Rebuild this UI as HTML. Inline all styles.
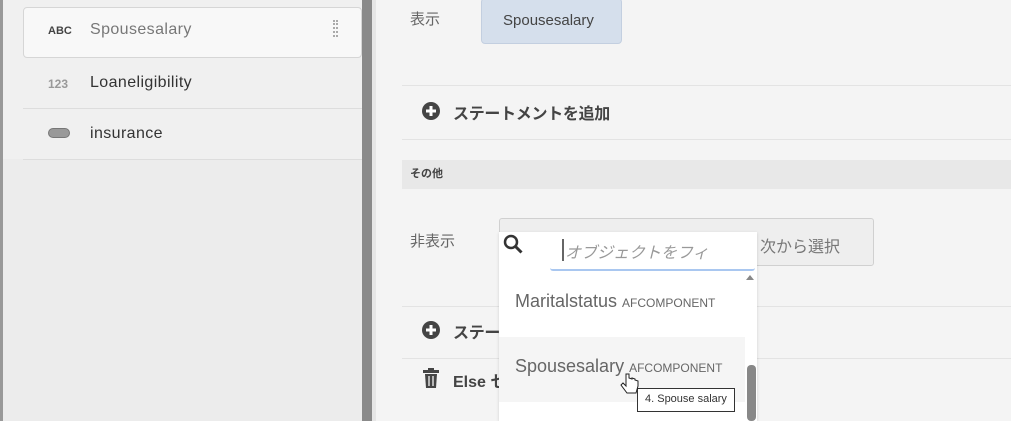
<!DOCTYPE html><html><head><meta charset="utf-8"><style>
*{margin:0;padding:0;box-sizing:border-box}
body{width:1011px;height:421px;overflow:hidden;background:#f4f4f4;font-family:"Liberation Sans","Noto Sans CJK JP",sans-serif;position:relative}
.a{position:absolute}
</style></head><body>
<div class="a" style="left:0;top:0;width:362px;height:421px;background:#ececec"></div>
<div class="a" style="left:0;top:0;width:3px;height:421px;background:#999"></div>
<div class="a" style="left:3px;top:0;width:359px;height:159px;background:#f0f0f0"></div>
<div class="a" style="left:23px;top:7px;width:339px;height:51px;background:#f8f8f8;border:1px solid #d6d6d6;border-radius:4px"></div>
<div class="a" style="left:48px;top:25px;font-size:11px;font-weight:bold;color:#444">ABC</div>
<div class="a" style="left:90px;top:21px;font-size:16px;color:#777;letter-spacing:.4px">Spousesalary</div>
<div class="a" style="left:333px;top:20px;width:5px;height:17px;border-left:2px dotted #aaa;border-right:2px dotted #aaa"></div>
<div class="a" style="left:48px;top:77px;font-size:12px;font-weight:bold;color:#999">123</div>
<div class="a" style="left:90px;top:74px;font-size:16px;color:#333;letter-spacing:.4px">Loaneligibility</div>
<div class="a" style="left:23px;top:108px;width:339px;height:1px;background:#ddd"></div>
<div class="a" style="left:48px;top:128px;width:22px;height:10px;border-radius:5px;background:#999;border:1px solid #777"></div>
<div class="a" style="left:90px;top:125px;font-size:16px;color:#333;letter-spacing:.4px">insurance</div>
<div class="a" style="left:23px;top:159px;width:339px;height:1px;background:#ddd"></div>
<div class="a" style="left:362px;top:0;width:10px;height:421px;background:#8a8a8a"></div>
<div class="a" style="left:372px;top:0;width:4px;height:421px;background:#e6e6e6"></div>

<div class="a" style="left:410px;top:8px;font-size:15px;color:#666">表示</div>
<div class="a" style="left:481px;top:-2px;width:141px;height:46px;background:#d5dfec;border:1px solid #c3cfe0;border-radius:4px"></div>
<div class="a" style="left:503px;top:12px;font-size:15px;color:#444">Spousesalary</div>
<div class="a" style="left:402px;top:85px;width:609px;height:1px;background:#e3e3e3"></div>
<svg class="a" style="left:421px;top:101px" width="20" height="20"><circle cx="10" cy="10" r="9" fill="#444"/><path d="M10 5v10M5 10h10" stroke="#fff" stroke-width="3"/></svg>
<div class="a" style="left:453px;top:100px;font-size:16px;font-weight:bold;color:#444;letter-spacing:-.3px">ステートメントを追加</div>
<div class="a" style="left:402px;top:139px;width:609px;height:1px;background:#e3e3e3"></div>
<div class="a" style="left:402px;top:160px;width:609px;height:29px;background:#e8e8e8"></div>
<div class="a" style="left:410px;top:165px;font-size:11px;font-weight:bold;color:#444">その他</div>
<div class="a" style="left:410px;top:230px;font-size:15px;color:#666">非表示</div>
<div class="a" style="left:499px;top:218px;width:375px;height:48px;background:#eee;border:1px solid #d0d0d0;border-radius:3px"></div>
<div class="a" style="left:760px;top:233px;font-size:16px;color:#777">次から選択</div>
<div class="a" style="left:402px;top:306px;width:609px;height:1px;background:#e3e3e3"></div>
<svg class="a" style="left:421px;top:320px" width="20" height="20"><circle cx="10" cy="10" r="9" fill="#444"/><path d="M10 5v10M5 10h10" stroke="#fff" stroke-width="3"/></svg>
<div class="a" style="left:453px;top:319px;font-size:16px;font-weight:bold;color:#444;letter-spacing:-.3px">ステー</div>
<div class="a" style="left:402px;top:358px;width:609px;height:1px;background:#e3e3e3"></div>
<svg class="a" style="left:422px;top:368px" width="18" height="21"><rect x="1" y="2" width="16" height="3" fill="#444"/><rect x="6" y="0" width="6" height="3" fill="#444"/><path d="M3 6h12l-1 14H4z" fill="#444"/><path d="M7 8v10M11 8v10" stroke="#f4f4f4" stroke-width="1.3"/></svg>
<div class="a" style="left:453px;top:368px;font-size:16px;font-weight:bold;color:#444">Else セ</div>

<div class="a" style="left:499px;top:232px;width:258px;height:189px;background:#fff;box-shadow:0 1px 3px rgba(0,0,0,.15)"></div>
<svg class="a" style="left:502px;top:233px" width="24" height="24"><circle cx="9" cy="9" r="6" fill="none" stroke="#333" stroke-width="2.5"/><path d="M13.5 13.5l6 6" stroke="#333" stroke-width="3"/></svg>
<div class="a" style="left:550px;top:232px;width:205px;height:39px;border-bottom:2px solid #a9c7f0;border-radius:0 0 3px 3px"></div>
<div class="a" style="left:562px;top:239px;width:2px;height:22px;background:#666"></div>
<div class="a" style="left:565px;top:239px;font-size:16px;font-style:italic;color:#999">オブジェクトをフィ</div>
<div class="a" style="left:499px;top:337px;width:246px;height:65px;background:#f5f5f5"></div>
<div class="a" style="left:515px;top:291px;font-size:18px;color:#666">Maritalstatus <span style="font-size:12px">AFCOMPONENT</span></div>
<div class="a" style="left:515px;top:356px;font-size:18px;color:#666">Spousesalary <span style="font-size:12px">AFCOMPONENT</span></div>
<div class="a" style="left:746px;top:275px;width:0;height:0;border-left:4px solid transparent;border-right:4px solid transparent;border-bottom:5px solid #888"></div>
<div class="a" style="left:747px;top:365px;width:9px;height:56px;background:#888;border-radius:4px"></div>
<div class="a" style="left:637px;top:388px;width:98px;height:24px;background:#fff;border:1px solid #333;font-size:11px;color:#333;padding:4px 0 0 7px">4. Spouse salary</div>
<svg class="a" style="left:620px;top:372px" width="20" height="24"><path d="M6 2v12l-3-3-2 2 6 8h9l2-7v-5l-3-1v-1l-3-1V7l-3-1V2z" fill="#fff" stroke="#222" stroke-width="1"/></svg>
</body></html>
